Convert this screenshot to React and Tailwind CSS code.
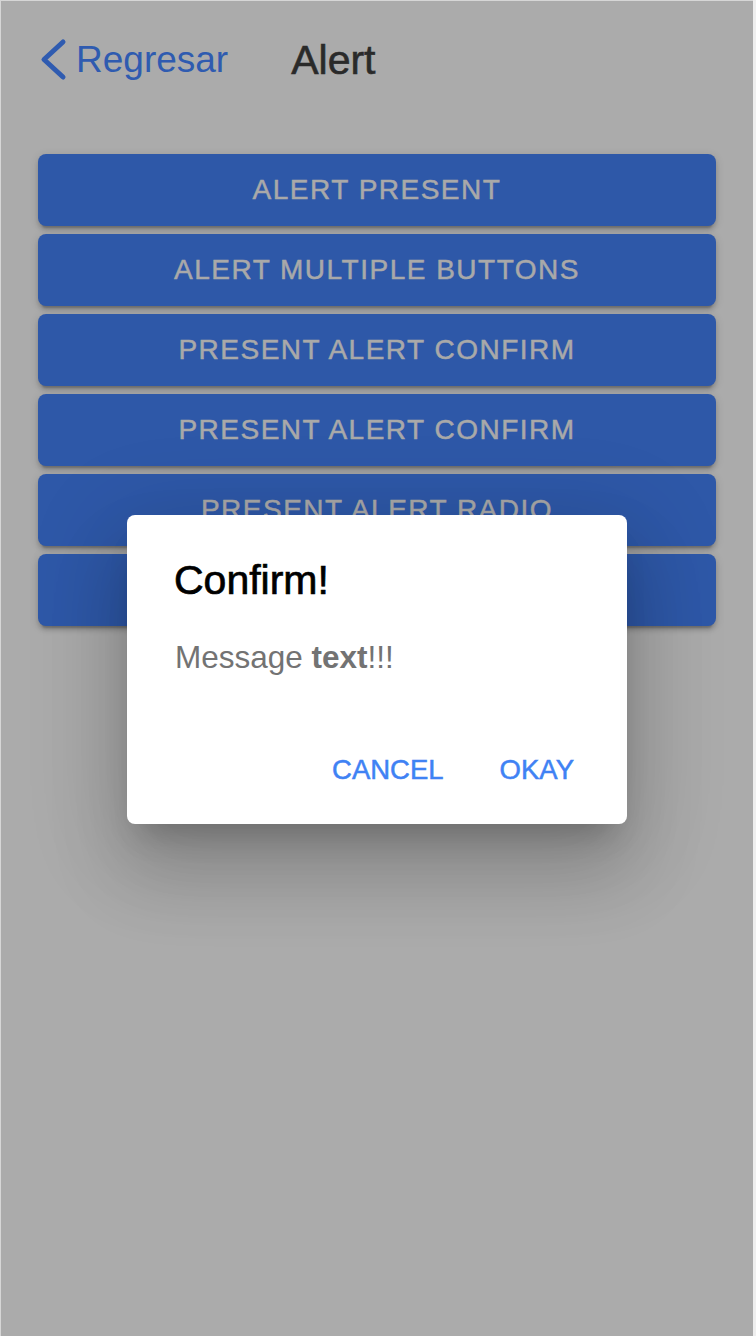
import React from "react";

const buttons = [
  "Alert Present",
  "Alert Multiple Buttons",
  "Present Alert Confirm",
  "Present Alert Confirm",
  "Present Alert Radio",
  "Present Alert Checkbox",
];

export default function App() {
  return (
    <div className="w-[756px] h-[1336px] bg-[#efefef] font-['Liberation_Sans',Arial,sans-serif]">
      <div className="relative w-[753px] h-[1336px] border-l border-t border-[#d6d6d6] bg-[#ababab] overflow-hidden">
        <header className="flex items-center h-[112px] pt-[5px] pl-[37px]">
          <svg width="30" height="44" viewBox="0 0 30 44" className="shrink-0">
            <polyline
              points="25,4 6,21.5 25,39"
              fill="none"
              stroke="#2f5bb0"
              strokeWidth="5"
              strokeLinecap="round"
              strokeLinejoin="round"
            />
          </svg>
          <span className="ml-[8px] text-[37px] leading-[44px] text-[#2f5bb0]">Regresar</span>
          <span className="ml-[63px] text-[41px] leading-[48px] text-[#2a2a2a] [-webkit-text-stroke:0.6px_#2a2a2a]">Alert</span>
        </header>

        <div className="flex flex-col gap-2 px-[37px] pt-[41px]">
          {buttons.map((b, i) => (
            <div
              key={i}
              className="h-[72px] flex items-center justify-center rounded-[8px] bg-[#2e58a8] shadow-[0_6px_2px_-4px_rgba(0,0,0,0.2),0_4px_4px_0_rgba(0,0,0,0.14),0_2px_10px_0_rgba(0,0,0,0.12)]"
            >
              <span className="uppercase text-[28px] leading-[32px] tracking-[1.5px] text-[#a9a9a9] [-webkit-text-stroke:0.5px_#a9a9a9]">
                {b}
              </span>
            </div>
          ))}
        </div>

        <div className="absolute inset-0 flex justify-center items-start pt-[514px]">
          <div className="w-[500px] rounded-[8px] bg-white pt-[41px] pb-[38px] shadow-[0_22px_30px_-14px_rgba(0,0,0,0.2),0_48px_76px_6px_rgba(0,0,0,0.14),0_18px_92px_16px_rgba(0,0,0,0.12)]">
            <div className="pl-[47px] text-[41px] leading-[48px] text-black [-webkit-text-stroke:0.7px_#000]">Confirm!</div>
            <div className="mt-[33px] pl-[48px] text-[31.5px] leading-[40px] text-[#737373]">
              Message <b className="font-bold">text</b>!!!
            </div>
            <div className="mt-[77px] flex justify-end gap-[56px] pr-[53px]">
              <span className="text-[27.5px] leading-[32px] text-[#3f82f4] [-webkit-text-stroke:0.5px_#3f82f4]">CANCEL</span>
              <span className="text-[27.5px] leading-[32px] text-[#3f82f4] [-webkit-text-stroke:0.5px_#3f82f4]">OKAY</span>
            </div>
          </div>
        </div>
      </div>
    </div>
  );
}
